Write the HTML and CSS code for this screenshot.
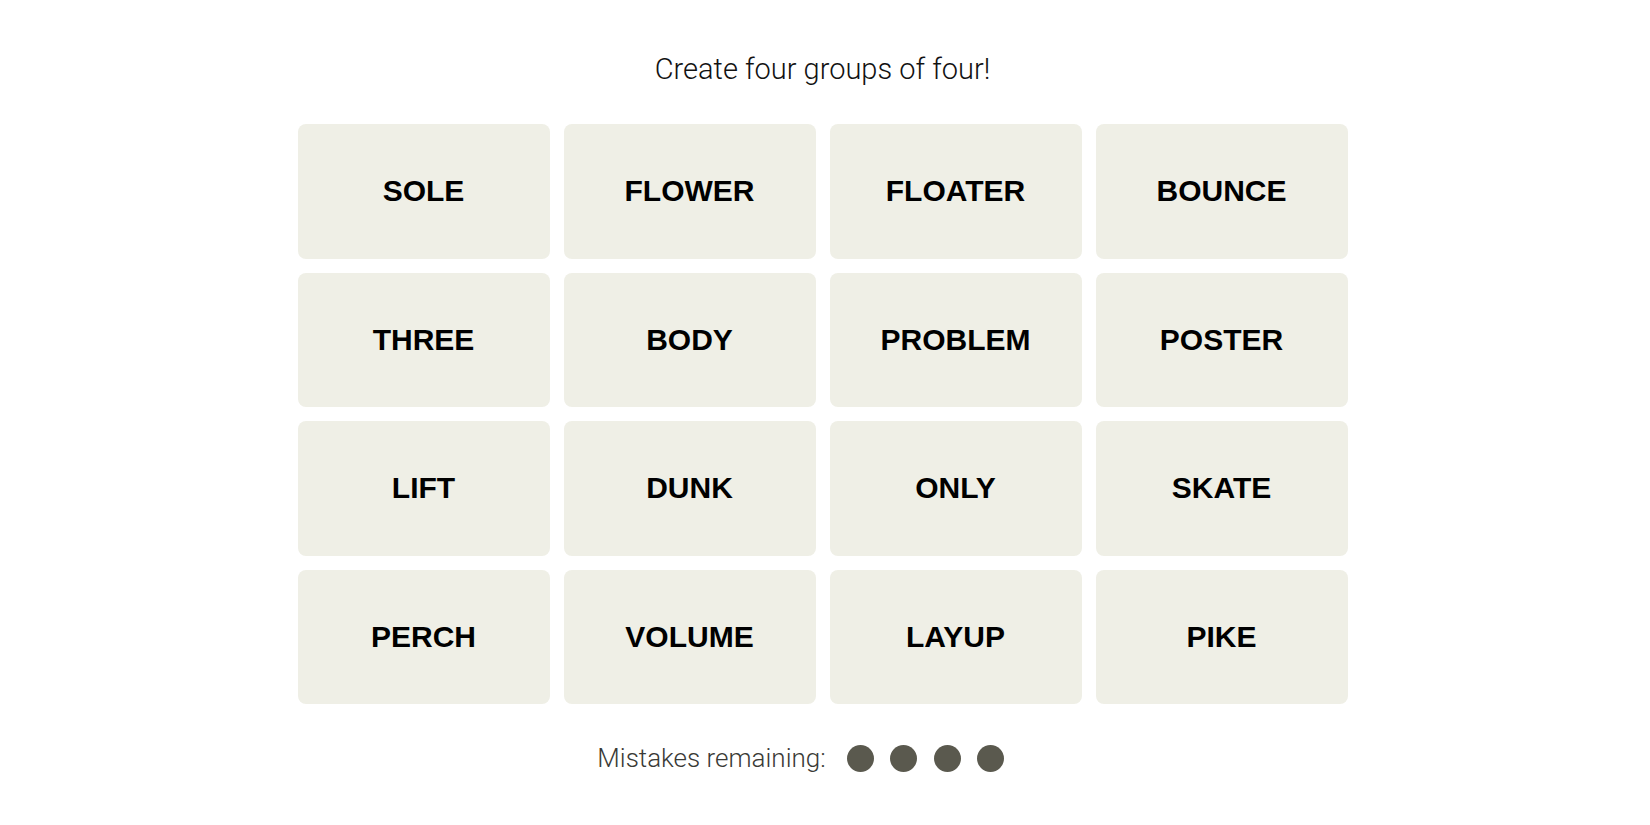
FILE: index.html
```html
<!DOCTYPE html>
<html lang="en">
<head>
<meta charset="utf-8">
<title>Connections</title>
<link rel="stylesheet" href="styles.css">
</head>
<body>
<main class="game">
  <p class="prompt">Create four groups of four!</p>
  <div class="board">
    <button class="tile">SOLE</button>
    <button class="tile">FLOWER</button>
    <button class="tile">FLOATER</button>
    <button class="tile">BOUNCE</button>
    <button class="tile">THREE</button>
    <button class="tile">BODY</button>
    <button class="tile">PROBLEM</button>
    <button class="tile">POSTER</button>
    <button class="tile">LIFT</button>
    <button class="tile">DUNK</button>
    <button class="tile">ONLY</button>
    <button class="tile">SKATE</button>
    <button class="tile">PERCH</button>
    <button class="tile">VOLUME</button>
    <button class="tile">LAYUP</button>
    <button class="tile">PIKE</button>
  </div>
  <div class="mistakes">
    <span class="mistakes-label">Mistakes remaining:</span>
    <span class="dots">
      <span class="dot"></span>
      <span class="dot"></span>
      <span class="dot"></span>
      <span class="dot"></span>
    </span>
  </div>
</main>
</body>
</html>
```
FILE: styles.css
```css
html, body {
  margin: 0;
  padding: 0;
  background: #ffffff;
}

body {
  font-family: Roboto, "Liberation Sans", sans-serif;
  color: #000;
}

.game {
  width: 1645px;
  display: flex;
  flex-direction: column;
  align-items: center;
  padding-top: 53px;
}

.prompt {
  margin: 0;
  font-size: 29px;
  line-height: 32px;
  font-weight: 300;
  color: #121212;
}

.board {
  margin-top: 39px;
  display: grid;
  grid-template-columns: repeat(4, 252px);
  grid-auto-rows: 134.5px;
  gap: 14px;
}

.tile {
  border: none;
  border-radius: 8px;
  background: #efefe6;
  color: #000;
  font-family: "Liberation Sans", Arial, sans-serif;
  font-weight: 700;
  font-size: 30px;
  padding: 0;
  display: flex;
  align-items: center;
  justify-content: center;
}

.mistakes {
  margin-top: 38px;
  display: flex;
  align-items: center;
  height: 32px;
}

.mistakes-label {
  font-size: 26px;
  font-weight: 300;
  color: #3a3a36;
  line-height: 32px;
  margin-right: 21px;
}

.dots {
  width: 201px;
  display: flex;
  align-items: center;
  gap: 16.5px;
}

.dot {
  width: 27px;
  height: 27px;
  border-radius: 50%;
  background: #5a594e;
}
```
